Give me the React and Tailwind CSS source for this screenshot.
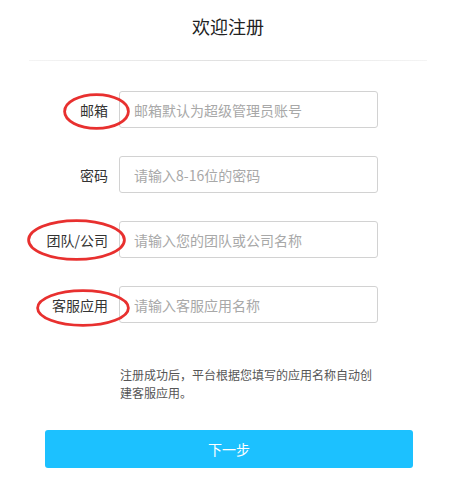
import React from 'react';

const fields = [
    { label: '邮箱', placeholder: '邮箱默认为超级管理员账号', type: 'text', ring: { left: 63, top: 2, w: 67, h: 37 } },
    { label: '密码', placeholder: '请输入8-16位的密码', type: 'password' },
    { label: '团队/公司', placeholder: '请输入您的团队或公司名称', type: 'text', ring: { left: 27, top: -2, w: 99, h: 42 } },
    { label: '客服应用', placeholder: '请输入客服应用名称', type: 'text', ring: { left: 36, top: 3, w: 94, h: 38 } },
];

// hand-drawn red circle marking a label
const Ring = ({ ring }) => (
    <svg
        className="absolute pointer-events-none"
        style={{ left: ring.left, top: ring.top }}
        width={ring.w}
        height={ring.h}
        viewBox={`0 0 ${ring.w} ${ring.h}`}
    >
        <ellipse
            cx={ring.w / 2}
            cy={ring.h / 2}
            rx={ring.w / 2 - 1.6}
            ry={ring.h / 2 - 1.6}
            fill="none"
            stroke="#e8302f"
            strokeWidth="2.8"
        />
    </svg>
);

export default function App() {
    return (
        <div className="w-[456px] h-[502px] bg-white" style={{ fontFamily: '"Noto Sans CJK SC", "Noto Sans", sans-serif' }}>
            {/* header */}
            <h1 className="pt-[13px] text-center text-[18px] leading-[26px] font-normal text-[#222]">欢迎注册</h1>
            <div className="mt-[21px] mx-[29px] h-px bg-gradient-to-r from-[#f4f4f4] via-[#e0e0e0] to-[#f4f4f4]"></div>

            {/* form rows */}
            <form className="mt-[30px] flex flex-col gap-[28px]" onSubmit={(e) => e.preventDefault()}>
                {fields.map((f, idx) => (
                    <div key={idx} className="relative flex items-center">
                        <label className="w-[108px] text-right text-[14px] text-[#333] leading-none">{f.label}</label>
                        <input
                            type={f.type}
                            placeholder={f.placeholder}
                            className="ml-[11px] w-[259px] h-[37px] border border-[#d2d2d2] rounded-[3px] px-[14px] text-[14px] text-[#333] placeholder-[#a8a8a8] focus:outline-none"
                        />
                        {f.ring && <Ring ring={f.ring} />}
                    </div>
                ))}
            </form>

            <p className="mt-[43px] ml-[120px] w-[256px] text-[12px] leading-[18px] text-[#555]">
                注册成功后，平台根据您填写的应用名称自动创建客服应用。
            </p>

            <button
                type="button"
                className="mt-[28px] ml-[45px] w-[368px] h-[38px] rounded-[3px] bg-[#1cc1ff] text-white text-[14px]"
            >
                下一步
            </button>
        </div>
    );
}
